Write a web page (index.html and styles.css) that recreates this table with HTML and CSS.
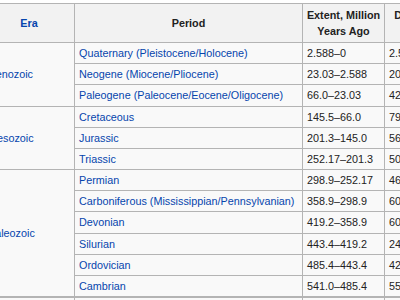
FILE: index.html
```html
<!DOCTYPE html>
<html>
<head>
<meta charset="utf-8">
<link rel="stylesheet" href="styles.css">
</head>
<body>
<div class="page">
<table class="wikitable">
<colgroup>
<col class="c-era"><col class="c-period"><col class="c-extent"><col class="c-dur">
</colgroup>
<thead>
<tr><th><a href="#">Era</a></th><th>Period</th><th>Extent, Million<br>Years Ago</th><th>Duration, Million<br>Years</th></tr>
</thead>
<tbody>
<tr><td rowspan="3" class="era"><a href="#">Cenozoic</a></td><td><a href="#">Quaternary (Pleistocene/Holocene)</a></td><td>2.588–0</td><td>2.588</td></tr>
<tr><td><a href="#">Neogene (Miocene/Pliocene)</a></td><td>23.03–2.588</td><td>20.44</td></tr>
<tr><td><a href="#">Paleogene (Paleocene/Eocene/Oligocene)</a></td><td>66.0–23.03</td><td>42.97</td></tr>
<tr><td rowspan="3" class="era"><a href="#">Mesozoic</a></td><td><a href="#">Cretaceous</a></td><td>145.5–66.0</td><td>79.5</td></tr>
<tr><td><a href="#">Jurassic</a></td><td>201.3–145.0</td><td>56.3</td></tr>
<tr><td><a href="#">Triassic</a></td><td>252.17–201.3</td><td>50.87</td></tr>
<tr><td rowspan="6" class="era"><a href="#">Paleozoic</a></td><td><a href="#">Permian</a></td><td>298.9–252.17</td><td>46.73</td></tr>
<tr><td><a href="#">Carboniferous (Mississippian/Pennsylvanian)</a></td><td>358.9–298.9</td><td>60.0</td></tr>
<tr><td><a href="#">Devonian</a></td><td>419.2–358.9</td><td>60.3</td></tr>
<tr><td><a href="#">Silurian</a></td><td>443.4–419.2</td><td>24.2</td></tr>
<tr><td><a href="#">Ordovician</a></td><td>485.4–443.4</td><td>42.0</td></tr>
<tr><td><a href="#">Cambrian</a></td><td>541.0–485.4</td><td>55.6</td></tr>
<tr class="next"><td class="era"><a href="#">Neoproterozoic</a></td><td><a href="#">Ediacaran</a></td><td>635.0–541.0</td><td>94.0</td></tr>
</tbody>
</table>
</div>
</body>
</html>
```
FILE: styles.css
```css
html, body {
  margin: 0;
  padding: 0;
  background: #ffffff;
  overflow: hidden;
}

.page {
  width: 400px;
  height: 300px;
  overflow: hidden;
  padding-top: 3px;
  box-sizing: border-box;
}

.wikitable {
  margin-left: -17px;
  border-collapse: collapse;
  table-layout: fixed;
  width: 505px;
  background: #f9f9f9;
  color: #222222;
  font-family: "Liberation Sans", Arial, Helvetica, sans-serif;
  font-size: 10.8px;
  line-height: 16.17px;
}

.c-era { width: 91px; }
.c-period { width: 228px; }
.c-extent { width: 82px; }
.c-dur { width: 104px; }

.wikitable th,
.wikitable td {
  border: 1px solid #b4b4b4;
  padding: 2px 4px;
  white-space: nowrap;
}

.wikitable th {
  background: #f2f2f2;
  font-weight: bold;
  text-align: center;
  padding: 3px 1px;
  line-height: 16px;
  vertical-align: middle;
}

.wikitable td {
  text-align: left;
  vertical-align: middle;
  overflow: hidden;
}

.wikitable a {
  color: #0645ad;
  text-decoration: none;
}

.wikitable tr.next td {
  border-top: 2px solid #b4b4b4;
}
```
